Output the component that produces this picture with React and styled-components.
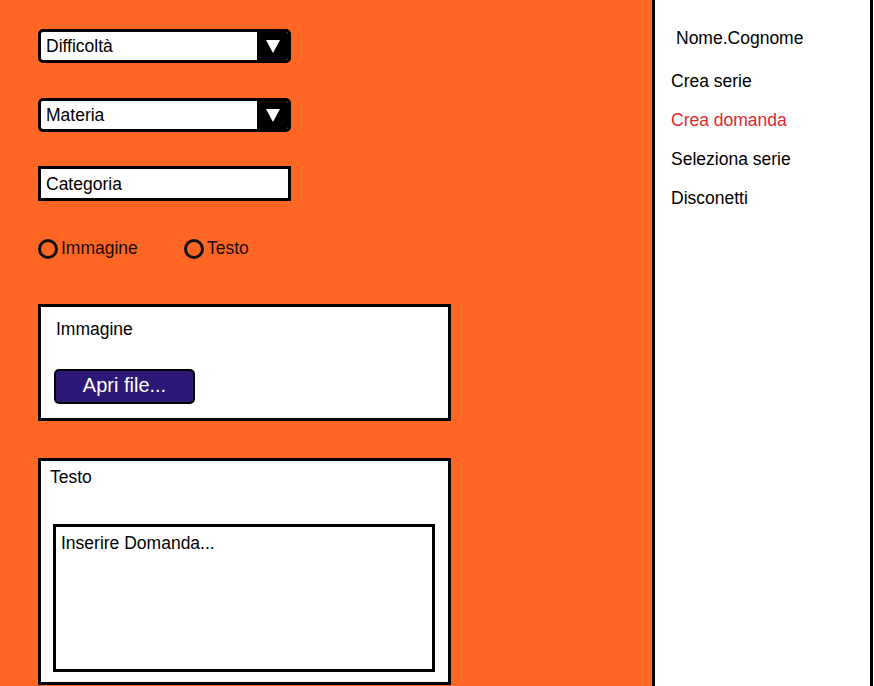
import React from 'react'
import styled, { createGlobalStyle } from 'styled-components'

const GlobalStyle = createGlobalStyle`
  html, body {
    margin: 0;
    padding: 0;
    background: #fff;
    font-family: 'Liberation Sans', Arial, sans-serif;
    overflow: hidden;
  }
`

const StyledPage = styled.div`
  display: flex;
  width: 874px;
  height: 686px;
  overflow: hidden;
`

const StyledMain = styled.main`
  width: 652px;
  flex-shrink: 0;
  background: #ff6523;
  padding: 29px 0 0 38px;
  box-sizing: border-box;
  display: flex;
  flex-direction: column;
  align-items: flex-start;
  & > * {
    flex-shrink: 0;
  }
`

const StyledSelect = styled.div`
  width: 253px;
  height: 34px;
  box-sizing: border-box;
  border: 3px solid #000;
  border-radius: 5px;
  background: #fff;
  display: flex;
  align-items: center;
  overflow: hidden;
  margin-bottom: ${({ gap }) => gap}px;
`

const StyledSelectLabel = styled.span`
  flex: 1;
  padding-left: 5px;
  font-size: 17.5px;
  color: #000;
`

const StyledSelectArrow = styled.span`
  width: 31px;
  height: 100%;
  background: #000;
  display: flex;
  align-items: center;
  justify-content: center;
`

const StyledInput = styled.div`
  width: 253px;
  height: 35px;
  box-sizing: border-box;
  border: 3px solid #000;
  background: #fff;
  padding: 2px 0 0 5px;
  display: flex;
  align-items: center;
  font-size: 17.5px;
  margin-bottom: 37px;
`

const StyledRadioRow = styled.div`
  display: flex;
  align-items: center;
  margin-bottom: 45px;
`

const StyledRadio = styled.label`
  display: flex;
  align-items: center;
  width: 146px;
  font-size: 17.5px;
  color: #1a0b05;
`

const StyledCircle = styled.span`
  width: 20px;
  height: 20px;
  box-sizing: border-box;
  border: 3px solid #111;
  border-radius: 50%;
  margin-right: 3px;
`

const StyledPanel = styled.section`
  width: 413px;
  height: ${({ h }) => h}px;
  box-sizing: border-box;
  border: 3px solid #000;
  background: #fff;
  padding: ${({ pad }) => pad};
  margin-bottom: 37px;
  display: flex;
  flex-direction: column;
  align-items: flex-start;
`

const StyledPanelTitle = styled.div`
  font-size: 17.5px;
  color: #000;
  margin-left: ${({ indent }) => indent || 0}px;
  margin-bottom: ${({ gap }) => gap}px;
`

const StyledButton = styled.button`
  width: 141px;
  height: 35px;
  box-sizing: border-box;
  border: 2px solid #000;
  border-radius: 5px;
  background: #2d1777;
  color: #fff;
  font-family: 'Liberation Sans', Arial, sans-serif;
  font-size: 20px;
  padding: 0 0 2px;
`

const StyledTextArea = styled.div`
  width: 382px;
  height: 148px;
  box-sizing: border-box;
  border: 3px solid #000;
  padding: 6px 0 0 5px;
  font-size: 17.5px;
  color: #000;
`

const StyledSidebar = styled.aside`
  width: 221px;
  flex-shrink: 0;
  height: 686px;
  box-sizing: border-box;
  border-left: 3px solid #000;
  border-right: 3px solid #000;
  background: #fff;
  padding: 28px 0 0 16px;
  display: flex;
  flex-direction: column;
`

const StyledUser = styled.div`
  font-size: 17.5px;
  padding-left: 5px;
  margin-bottom: 22px;
  color: #000;
`

const StyledNavItem = styled.div`
  font-size: 17.5px;
  height: 39px;
  color: ${({ active }) => (active ? '#e3262d' : '#000')};
`

const navItems = ['Crea serie', 'Crea domanda', 'Seleziona serie', 'Disconetti']

const Arrow = () => (
  <svg width="14" height="13" viewBox="0 0 14 13">
    <polygon points="0,0 14,0 7,13" fill="#fff" />
  </svg>
)

const App = () => {
  return (
    <>
      <GlobalStyle />
      <StyledPage>
        <StyledMain>
          <StyledSelect gap={35}>
            <StyledSelectLabel>Difficoltà</StyledSelectLabel>
            <StyledSelectArrow>
              <Arrow />
            </StyledSelectArrow>
          </StyledSelect>
          <StyledSelect gap={34}>
            <StyledSelectLabel>Materia</StyledSelectLabel>
            <StyledSelectArrow>
              <Arrow />
            </StyledSelectArrow>
          </StyledSelect>
          <StyledInput>Categoria</StyledInput>
          <StyledRadioRow>
            <StyledRadio>
              <StyledCircle />
              Immagine
            </StyledRadio>
            <StyledRadio>
              <StyledCircle />
              Testo
            </StyledRadio>
          </StyledRadioRow>
          <StyledPanel h={117} pad="12px 0 0 13px">
            <StyledPanelTitle indent={2} gap={29}>
              Immagine
            </StyledPanelTitle>
            <StyledButton>Apri file...</StyledButton>
          </StyledPanel>
          <StyledPanel h={227} pad="6px 0 0 12px">
            <StyledPanelTitle indent={-3} gap={36}>
              Testo
            </StyledPanelTitle>
            <StyledTextArea>Inserire Domanda...</StyledTextArea>
          </StyledPanel>
        </StyledMain>
        <StyledSidebar>
          <StyledUser>Nome.Cognome</StyledUser>
          {navItems.map((item) => (
            <StyledNavItem key={item} active={item === 'Crea domanda'}>
              {item}
            </StyledNavItem>
          ))}
        </StyledSidebar>
      </StyledPage>
    </>
  )
}

export default App
